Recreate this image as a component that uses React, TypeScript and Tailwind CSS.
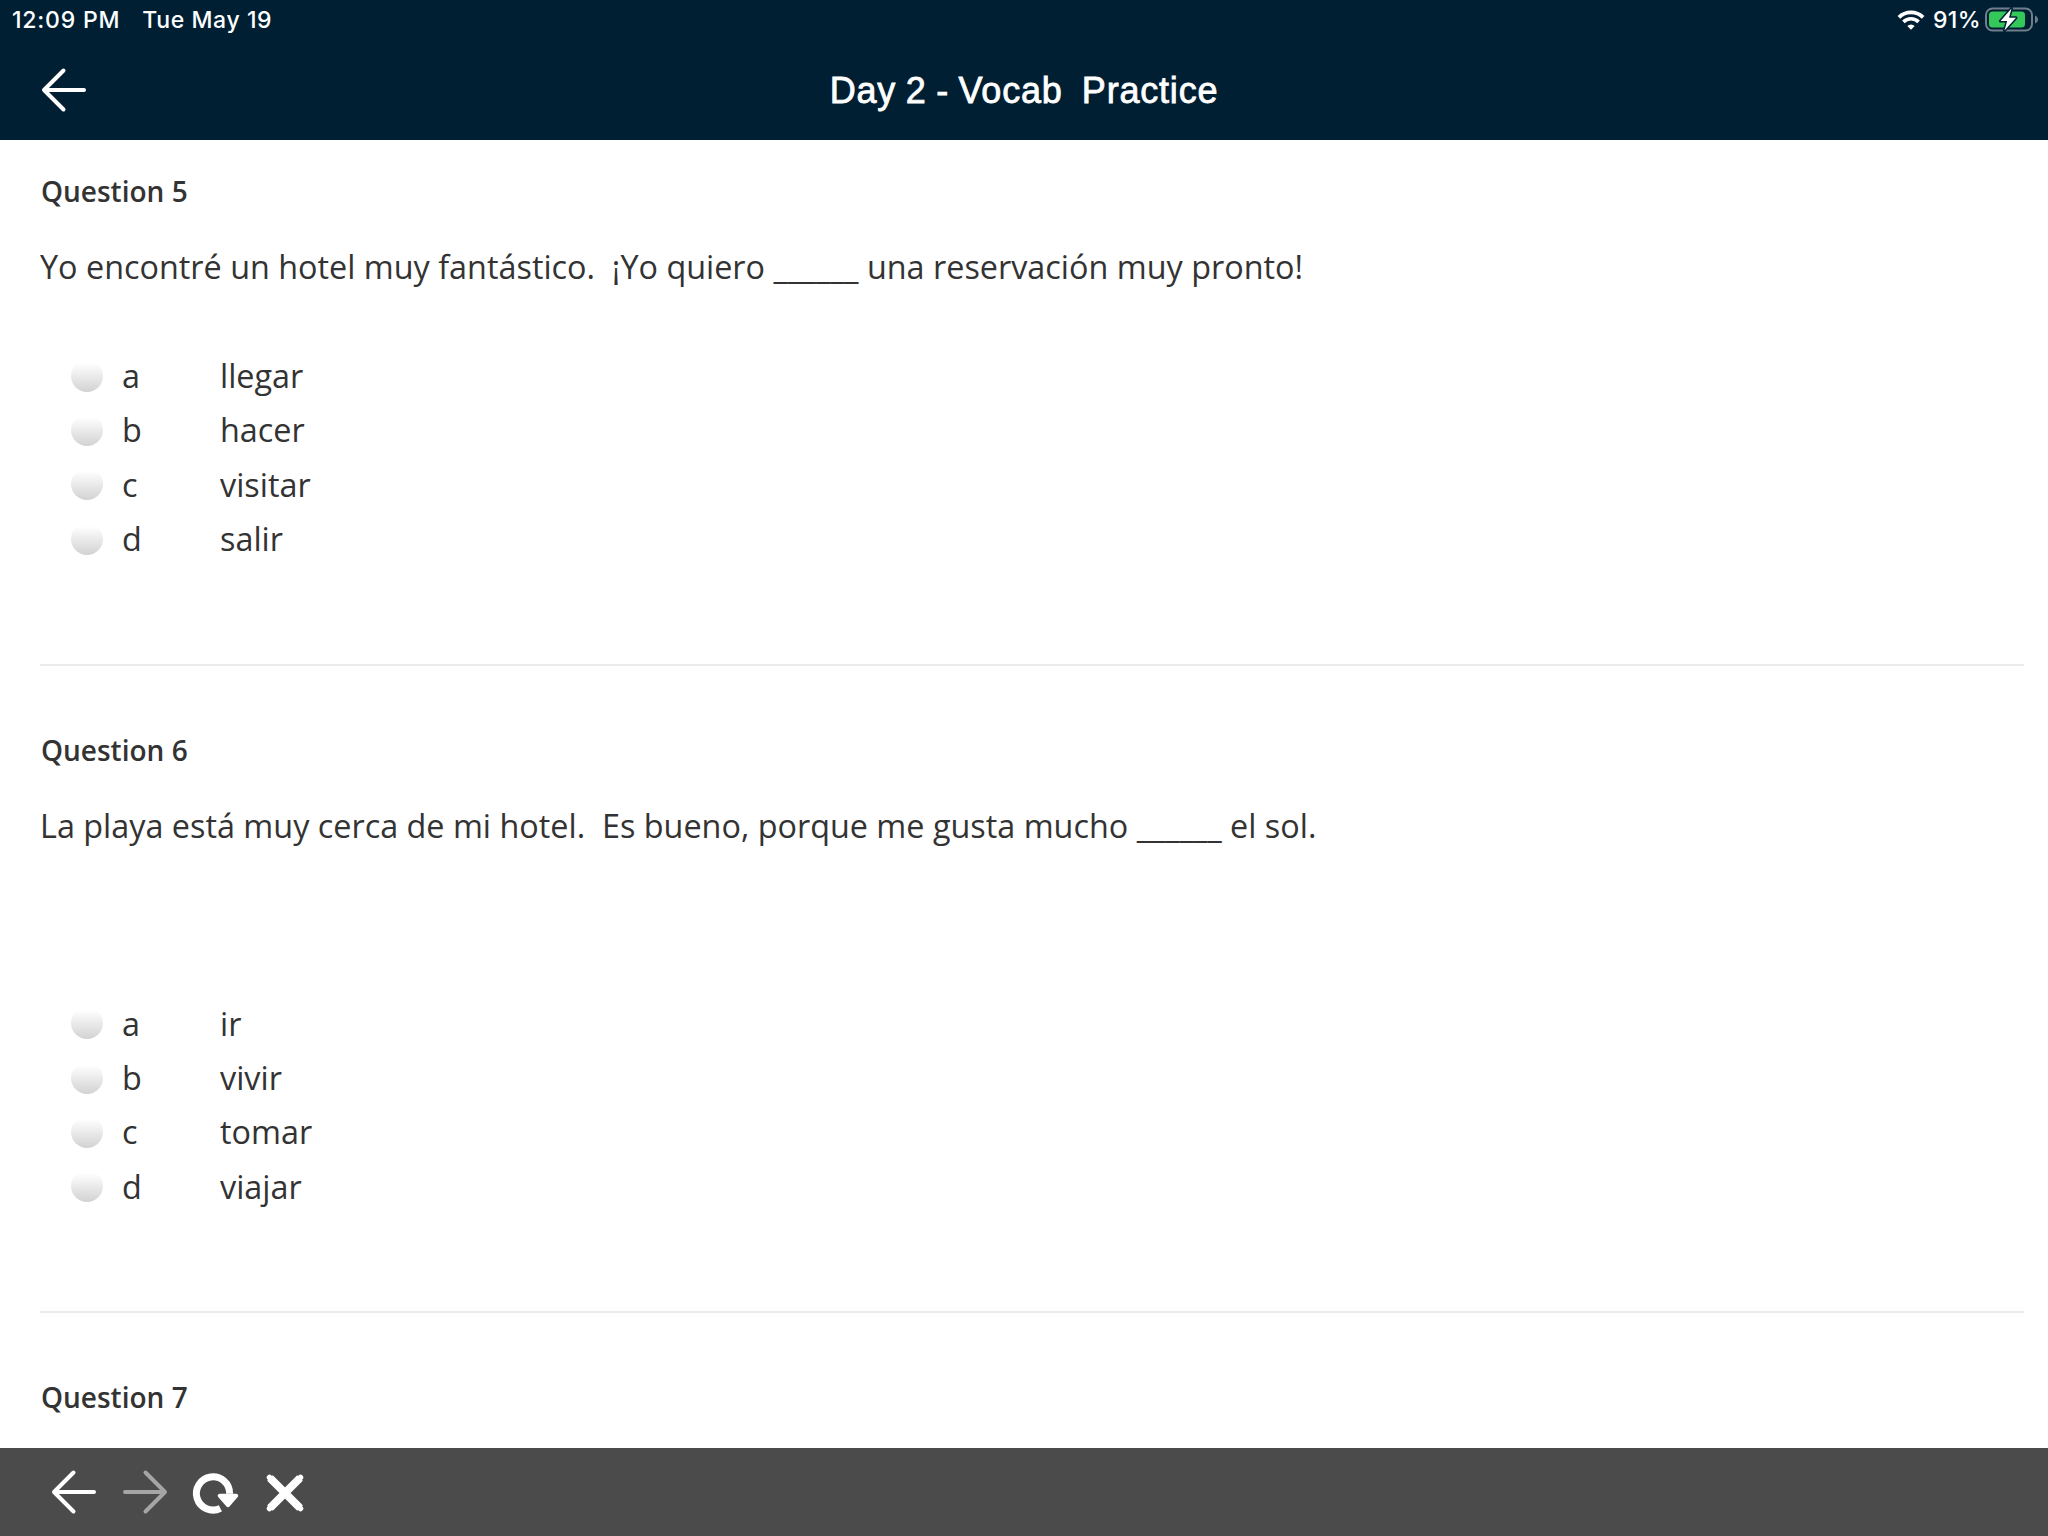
import React from "react";

interface Option {
  letter: string;
  text: string;
}

interface Question {
  number: number;
  prompt?: string;
  options: Option[];
  // some prompts carry an extra empty paragraph before the answers
  extraSpace?: boolean;
}

const questions: Question[] = [
  {
    number: 5,
    prompt: "Yo encontré un hotel muy fantástico.\u00a0 ¡Yo quiero ______ una reservación muy pronto!",
    options: [
      { letter: "a", text: "llegar" },
      { letter: "b", text: "hacer" },
      { letter: "c", text: "visitar" },
      { letter: "d", text: "salir" },
    ],
  },
  {
    number: 6,
    prompt: "La playa está muy cerca de mi hotel.\u00a0 Es bueno, porque me gusta mucho ______ el sol.",
    extraSpace: true,
    options: [
      { letter: "a", text: "ir" },
      { letter: "b", text: "vivir" },
      { letter: "c", text: "tomar" },
      { letter: "d", text: "viajar" },
    ],
  },
  { number: 7, options: [] },
];

function ArrowIcon({ className = "" }: { className?: string }) {
  return (
    <svg
      width="46"
      height="46"
      viewBox="0 0 46 46"
      fill="none"
      stroke="currentColor"
      strokeWidth="4"
      strokeLinecap="round"
      strokeLinejoin="round"
      className={className}
    >
      <path d="M23.5 3.5 4 23l19.5 19.5M4 23h40" />
    </svg>
  );
}

function ReloadIcon() {
  return (
    <svg width="50" height="46" viewBox="0 0 50 46" fill="none">
      <path d="M29.4 38.3A16.6 16.6 0 1 1 38.6 23.7" stroke="#fff" strokeWidth="7" />
      <path d="M28.7 25.7h16.5l-8.2 9.5z" fill="#fff" stroke="#fff" strokeWidth="4" strokeLinejoin="round" />
    </svg>
  );
}

function CloseIcon() {
  return (
    <svg width="40" height="40" viewBox="0 0 40 40" fill="none">
      <path d="M5 5l30 30M35 5L5 35" stroke="#fff" strokeWidth="8" />
      <path d="M4.5 4.5l31 31M35.5 4.5l-31 31" stroke="#fff" strokeWidth="5.5" strokeLinecap="round" />
    </svg>
  );
}

function WifiIcon() {
  return (
    <svg width="28" height="20" viewBox="0 0 28 20" fill="none">
      <path d="M1.9 7.4a17.2 17.2 0 0 1 24.2 0" stroke="#fff" strokeWidth="3.8" />
      <path d="M6.4 11.9a10.8 10.8 0 0 1 15.2 0" stroke="#fff" strokeWidth="3.6" />
      <path d="M14 19.8l-3.7-3.8a5.3 5.3 0 0 1 7.4 0z" fill="#fff" />
    </svg>
  );
}

function BatteryIcon() {
  return (
    <svg width="54" height="26" viewBox="0 0 54 26" fill="none">
      <rect x="1" y="1.5" width="46" height="22" rx="6.5" stroke="#6f7f8b" strokeWidth="2" />
      <path d="M50 8.5c2 .8 3 2.3 3 4s-1 3.2-3 4z" fill="#6f7f8b" />
      <rect x="4" y="4.5" width="36" height="16" rx="3.5" fill="#34c759" />
      <path
        d="M26.5 1.5L15.5 14h6.7l-2.7 9.5L31 10.8h-7z"
        fill="#fff"
        stroke="#001f33"
        strokeWidth="3"
        strokeLinejoin="round"
        paintOrder="stroke"
      />
    </svg>
  );
}

function StatusBar() {
  return (
    <div className="flex h-10 items-center justify-between pl-3 pr-[9px] font-['Inter',sans-serif] text-[23px] font-medium leading-10 text-white">
      <div className="flex gap-[22px]">
        <span className="tracking-[0.8px]">12:09 PM</span>
        <span className="tracking-[0.6px]">Tue May 19</span>
      </div>
      <div className="flex items-center">
        <WifiIcon />
        <span className="ml-2 mr-1 tracking-[0.4px]">91%</span>
        <BatteryIcon />
      </div>
    </div>
  );
}

function QuestionBlock({ question }: { question: Question }) {
  return (
    <section>
      <h2 className="pl-px text-[28px] font-semibold leading-10">Question {question.number}</h2>
      {question.prompt && (
        <p className="mt-[31px] whitespace-pre text-[32.36px] leading-[48px]">{question.prompt}</p>
      )}
      {question.options.length > 0 && (
        <ul className={question.extraSpace ? "mt-[147px]" : "mt-[58px]"}>
          {question.options.map((o) => (
            <li key={o.letter} className="flex h-[54.4px] items-center pl-[31px] text-[32.36px] leading-[54.4px]">
              <span className="mr-[19px] mt-px h-8 w-8 rounded-full bg-linear-to-b from-white from-10% to-[#d2d2d2]" />
              <span className="w-[98px]">{o.letter}</span>
              <span>{o.text}</span>
            </li>
          ))}
        </ul>
      )}
    </section>
  );
}

export default function App() {
  return (
    <div className="flex h-[1536px] w-[2048px] flex-col overflow-hidden bg-white">
      <header className="h-[140px] shrink-0 bg-[#001f33] text-white">
        <StatusBar />
        <div className="grid h-[100px] grid-cols-[1fr_auto_1fr] items-center">
          <ArrowIcon className="ml-10" />
          <h1 className="whitespace-pre pt-0.5 font-['Liberation_Sans',sans-serif] text-[36px] leading-[98px] tracking-[0.8px] [word-spacing:-1.2px] [-webkit-text-stroke:0.8px_white]">
            Day 2 - Vocab&nbsp; Practice
          </h1>
        </div>
      </header>

      <main className="min-h-0 flex-1 overflow-hidden pl-10 pr-6 pt-[31px] font-['Open_Sans',sans-serif] text-[#333]">
        {questions.map((q, i) => (
          <React.Fragment key={q.number}>
            {i > 0 && <hr className="mb-16 mt-[98px] border-t-2 border-[#ebebeb]" />}
            <QuestionBlock question={q} />
          </React.Fragment>
        ))}
      </main>

      <footer className="flex h-[88px] shrink-0 items-center bg-[#4b4b4b] pl-[50px] text-white">
        <ArrowIcon />
        <ArrowIcon className="ml-[27px] rotate-180 text-[#a5a5a5]" />
        <div className="ml-[22px] pt-px">
          <ReloadIcon />
        </div>
        <div className="ml-6 pt-px">
          <CloseIcon />
        </div>
      </footer>
    </div>
  );
}
